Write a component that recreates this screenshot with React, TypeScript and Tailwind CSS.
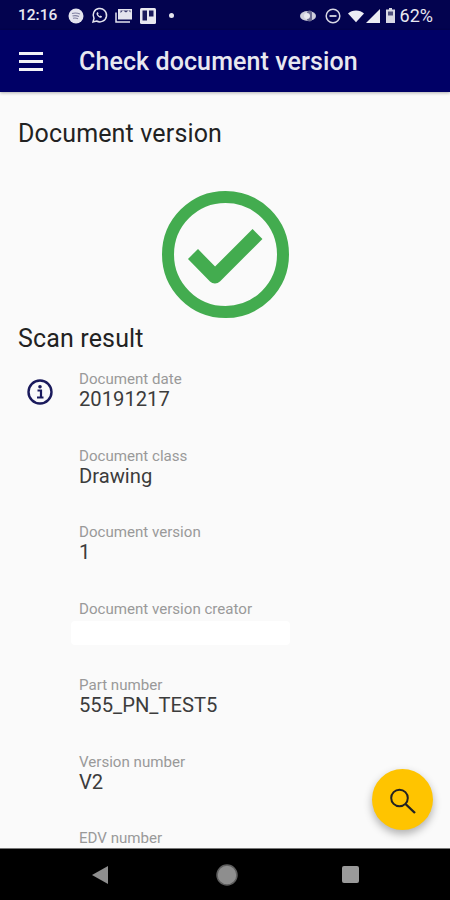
const rows = [
  { label: 'Document date', value: '20191217' },
  { label: 'Document class', value: 'Drawing' },
  { label: 'Document version', value: '1' },
  { label: 'Document version creator', value: '' },
  { label: 'Part number', value: '555_PN_TEST5' },
  { label: 'Version number', value: 'V2' },
  { label: 'EDV number', value: '' },
];

function StatusIcons() {
  return (
    <div className="flex items-center gap-[7px] ml-[11px]">
      {/* spotify */}
      <svg width="16" height="16" viewBox="0 0 16 16">
        <circle cx="8" cy="8" r="7.5" fill="#e4e4ee" />
        <path d="M4 5.500c2.500-.8 5.500-.6 8 .6M4.500 8c2-.6 4.500-.4 6.500.6M5 10.200c1.700-.4 3.500-.3 5 .5" stroke="#8080a0" strokeWidth="1.100" fill="none" />
      </svg>
      {/* whatsapp */}
      <svg width="17" height="17" viewBox="0 0 17 17" fill="none">
        <path d="M2 15l1-3.600A6.700 6.700 0 1 1 5.600 14z" stroke="#e4e4ee" strokeWidth="1.500" />
        <path d="M6 5.500c-.8.800-.6 2 .6 3.400 1.300 1.500 2.800 2.200 3.900 1.600l.6-1-1.500-.9-.7.600c-.8-.3-1.500-1-1.900-1.900l.6-.7-.8-1.500z" fill="#e4e4ee" />
      </svg>
      {/* photos */}
      <svg width="18" height="15" viewBox="0 0 18 15">
        <path d="M3 1h14v10.500H3z" fill="#e4e4ee" />
        <path d="M1 4.500v9.500h14" stroke="#e4e4ee" strokeWidth="1.500" fill="none" />
        <path d="M5.500 5l2.500-2.500 3 2 2.500-2 2 2v-2H5.500z" fill="#3a3a6c" />
      </svg>
      {/* trello */}
      <svg width="16" height="16" viewBox="0 0 16 16">
        <rect width="16" height="16" rx="1.500" fill="#e8e8f0" />
        <rect x="2.500" y="2.500" width="4.500" height="10" fill="#1a1a5c" />
        <rect x="9" y="2.500" width="4.500" height="6" fill="#1a1a5c" />
      </svg>
      <span className="w-[5px] h-[5px] rounded-full bg-[#e4e4ee] ml-[6px]" />
    </div>
  );
}

function StatusRight() {
  return (
    <div className="flex items-center">
      {/* data saver eye */}
      <svg width="16" height="12" viewBox="0 0 16 12" className="mr-[9px]">
        <ellipse cx="8" cy="6" rx="8" ry="5" fill="#cfcfdc" />
        <rect x="7" y="0.500" width="5" height="11" rx="2.500" fill="#6a6a90" />
        <circle cx="7" cy="6" r="3" fill="#e8e8f0" />
      </svg>
      {/* dnd */}
      <svg width="16" height="16" viewBox="0 0 16 16" fill="none" className="mr-[7px]">
        <circle cx="8" cy="8" r="6.800" stroke="#d8d8e4" strokeWidth="1.500" />
        <path d="M4.500 8h7" stroke="#d8d8e4" strokeWidth="1.800" />
      </svg>
      {/* wifi */}
      <svg width="16" height="14" viewBox="0 0 18 14" className="mr-[2px]">
        <path d="M0 4.200C2.300 2 5.500 .8 9 .8s6.700 1.200 9 3.400L9 14z" fill="#ecedf4" />
      </svg>
      {/* signal */}
      <svg width="14" height="14" viewBox="0 0 15 15" className="mr-[6px]">
        <path d="M15 0v15H0z" fill="#ecedf4" />
      </svg>
      {/* battery */}
      <svg width="9" height="15" viewBox="0 0 9 15" className="mr-[5px]">
        <path d="M3 0h3v1.500h3V15H0V1.500h3z" fill="#d8d8e4" />
        <path d="M2 3.500h5v4H2z" fill="#50507c" />
      </svg>
      <span className="text-[18px] leading-none text-[#e8e8f0]">62%</span>
    </div>
  );
}

export default function App() {
  return (
    <div className="relative w-[450px] h-[900px] flex flex-col overflow-hidden bg-[#fafafa] font-['Roboto',sans-serif]">
      {/* Status bar */}
      <div className="h-[30px] shrink-0 bg-[#03034f] flex items-center justify-between pl-[18px] pr-[17px] pt-[1px]">
        <div className="flex items-center">
          <span className="text-[15.500px] leading-none font-medium text-[#e8e8f0]">12:16</span>
          <StatusIcons />
        </div>
        <StatusRight />
      </div>

      {/* App bar */}
      <div className="h-[62px] shrink-0 bg-[#000066] flex items-center pl-[19px] shadow-[0_1px_3px_rgba(0,0,0,0.3)] z-10">
        <div className="w-[24px] flex flex-col gap-[5px]">
          <span className="h-[3px] bg-[#f2f2f8]" />
          <span className="h-[3px] bg-[#f2f2f8]" />
          <span className="h-[3px] bg-[#f2f2f8]" />
        </div>
        <h1 className="ml-[36px] text-[25px] tracking-[0.1px] leading-none font-medium text-[#e8e8f0]">Check document version</h1>
      </div>

      {/* Content */}
      <div className="flex-1 overflow-hidden px-[18px]">
        <h2 className="mt-[28px] text-[25px] tracking-[0.15px] leading-[28px] text-[#222222]">Document version</h2>
        <div className="mt-[43px] flex justify-center">
          <svg width="127" height="127" viewBox="0 0 127 127" fill="none" className="ml-[1px]">
            <circle cx="63.500" cy="63.500" r="57.500" stroke="#43ac4f" strokeWidth="12" />
            <path d="M31 63l22 22.500L95.500 43" stroke="#43ac4f" strokeWidth="14" strokeLinejoin="round" />
          </svg>
        </div>
        <h2 className="mt-[7px] text-[25px] tracking-[0.15px] leading-[28px] text-[#222222]">Scan result</h2>

        <div className="flex mt-[17px]">
          <svg width="26" height="26" viewBox="0 0 26 26" fill="none" className="ml-[9px] mt-[9px] shrink-0">
            <circle cx="13" cy="13" r="11.500" stroke="#1a1a5c" strokeWidth="2.400" />
            <circle cx="13" cy="7.800" r="1.800" fill="#1a1a5c" />
            <path d="M10.500 11.500H14V18M10 18.500h6.500" stroke="#1a1a5c" strokeWidth="2.200" />
          </svg>
          <div className="ml-[26px] flex flex-col gap-[18px]">
            {rows.map((row) => (
              <div key={row.label} className="h-[58.500px]">
                <div className="text-[15.100px] leading-[18px] text-[#999999]">{row.label}</div>
                {row.value ? (
                  <div className="text-[20.200px] leading-[23px] text-[#3c3c3c]">{row.value}</div>
                ) : row.label === 'Document version creator' ? (
                  <div className="ml-[-8px] mt-[3px] w-[219px] h-[24px] bg-white rounded-sm" />
                ) : null}
              </div>
            ))}
          </div>
        </div>
      </div>

      {/* Search button */}
      <button className="absolute left-[372px] top-[769px] w-[61px] h-[61px] rounded-full bg-[#ffc400] flex items-center justify-center shadow-[0_4px_8px_rgba(0,0,0,0.3)]">
        <svg width="28" height="28" viewBox="0 0 28 28" fill="none">
          <circle cx="10.500" cy="12" r="8.300" stroke="#222222" strokeWidth="2" />
          <path d="M16.500 18l9.500 9" stroke="#222222" strokeWidth="2.400" />
        </svg>
      </button>

      {/* Nav bar */}
      <div className="h-[52px] shrink-0 bg-black border-t border-[#777777] flex items-center justify-between pl-[92px] pr-[91px]">
        <svg width="16" height="18" viewBox="0 0 16 18"><path d="M16 0v18L0 9z" fill="#8e8e8e" /></svg>
        <svg width="22" height="22" viewBox="0 0 22 22" className="ml-[3px]">
          <circle cx="11" cy="11" r="10" fill="#8e8e8e" stroke="#5e5e5e" strokeWidth="1.500" />
        </svg>
        <span className="w-[17px] h-[17px] rounded-[2px] bg-[#9a9a9a]" />
      </div>
    </div>
  );
}
